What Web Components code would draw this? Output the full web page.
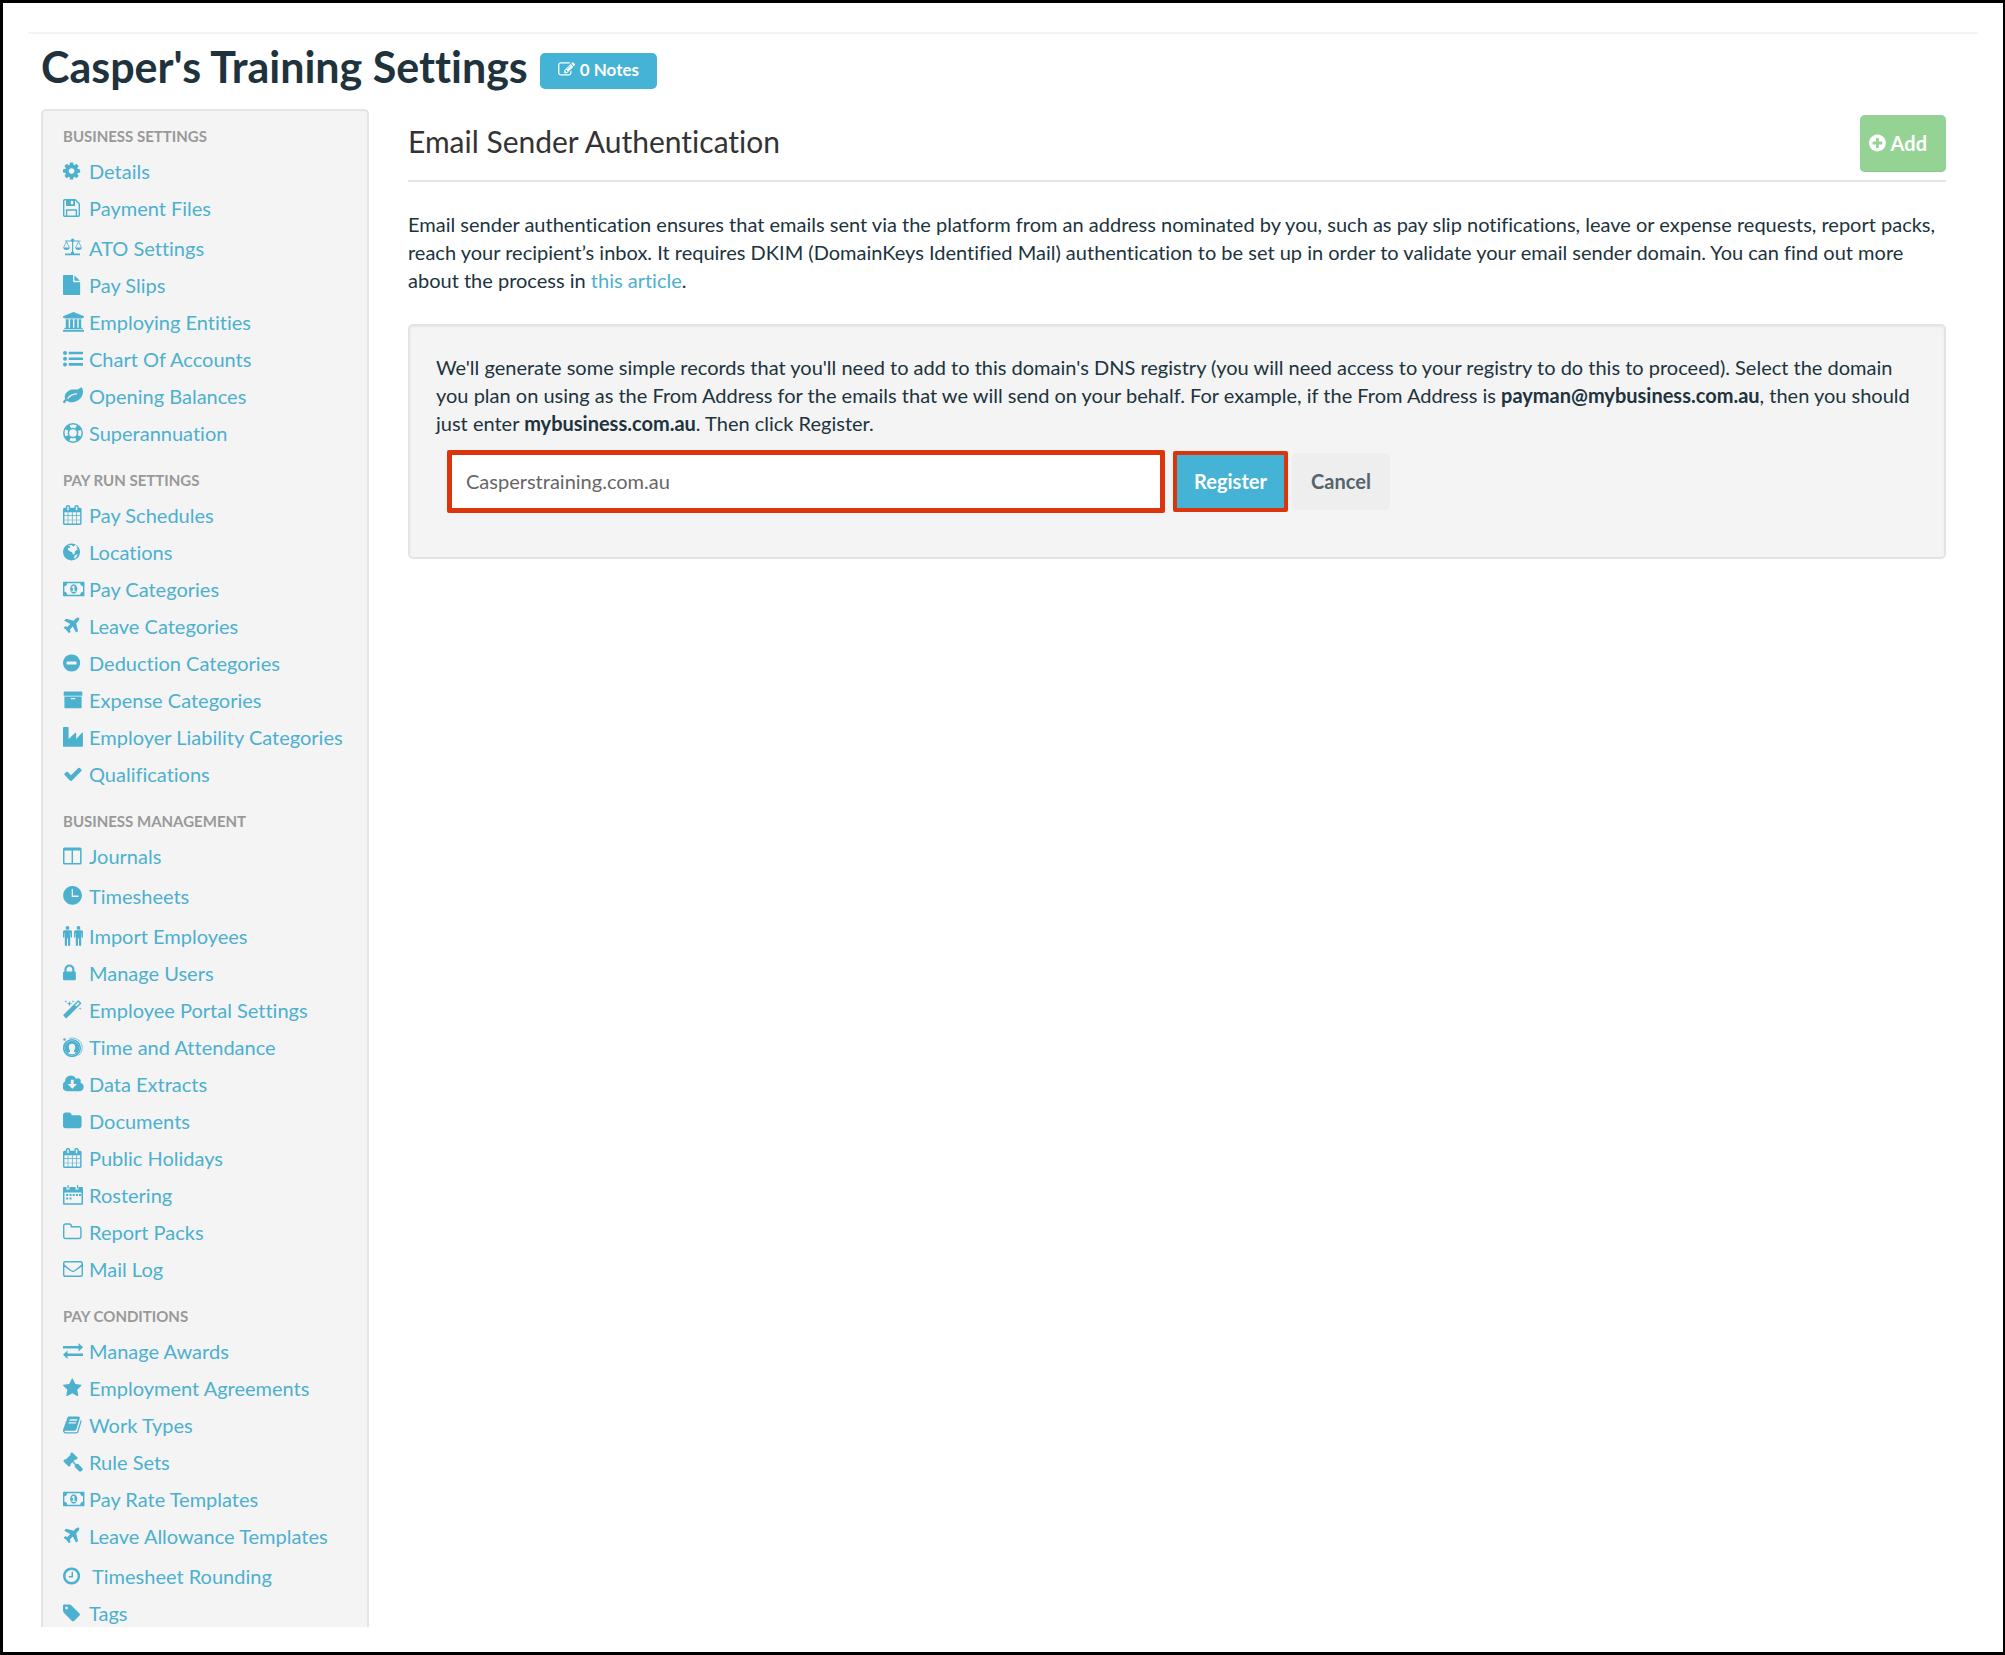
<!DOCTYPE html>
<html lang="en">
<head>
<meta charset="utf-8">
<title>Casper's Training Settings</title>
<style>
    :root {
        --blue: #45b3d6;
        --link: #4cb0cf;
        --ink: #20333d;
        --panel: #f4f4f4;
        --line: #e4e4e4;
        --red: #dd350b;
    }

    body {
        margin: 0;
        background: #fff;
        color: var(--ink);
        font-family: Lato, "Open Sans", sans-serif;
        font-size: 20px;
        line-height: 28px;
        font-variant-ligatures: none;
    }
</style>
</head>
<body>

<settings-page>
    <page-header slot="header" notes="0">Casper's Training Settings</page-header>

    <settings-nav slot="nav">
        <nav-group label="Business Settings">
            <nav-item icon="cog">Details</nav-item>
            <nav-item icon="floppy">Payment Files</nav-item>
            <nav-item icon="scales" size="tall">ATO Settings</nav-item>
            <nav-item icon="file">Pay Slips</nav-item>
            <nav-item icon="university">Employing Entities</nav-item>
            <nav-item icon="list">Chart Of Accounts</nav-item>
            <nav-item icon="leaf">Opening Balances</nav-item>
            <nav-item icon="ring">Superannuation</nav-item>
        </nav-group>
        <nav-group label="Pay Run Settings">
            <nav-item icon="calendar">Pay Schedules</nav-item>
            <nav-item icon="globe">Locations</nav-item>
            <nav-item icon="money">Pay Categories</nav-item>
            <nav-item icon="plane">Leave Categories</nav-item>
            <nav-item icon="minus">Deduction Categories</nav-item>
            <nav-item icon="archive">Expense Categories</nav-item>
            <nav-item icon="industry">Employer Liability Categories</nav-item>
            <nav-item icon="check">Qualifications</nav-item>
        </nav-group>
        <nav-group label="Business Management">
            <nav-item icon="columns">Journals</nav-item>
            <nav-item icon="clock" size="taller">Timesheets</nav-item>
            <nav-item icon="people">Import Employees</nav-item>
            <nav-item icon="lock">Manage Users</nav-item>
            <nav-item icon="magic">Employee Portal Settings</nav-item>
            <nav-item icon="attendance">Time and Attendance</nav-item>
            <nav-item icon="cloud">Data Extracts</nav-item>
            <nav-item icon="folder">Documents</nav-item>
            <nav-item icon="calendar">Public Holidays</nav-item>
            <nav-item icon="roster">Rostering</nav-item>
            <nav-item icon="folder-o">Report Packs</nav-item>
            <nav-item icon="envelope">Mail Log</nav-item>
        </nav-group>
        <nav-group label="Pay Conditions">
            <nav-item icon="exchange">Manage Awards</nav-item>
            <nav-item icon="star">Employment Agreements</nav-item>
            <nav-item icon="book">Work Types</nav-item>
            <nav-item icon="gavel">Rule Sets</nav-item>
            <nav-item icon="money">Pay Rate Templates</nav-item>
            <nav-item icon="plane">Leave Allowance Templates</nav-item>
            <nav-item icon="clock-o" size="tall" wide>Timesheet Rounding</nav-item>
            <nav-item icon="tag">Tags</nav-item>
        </nav-group>
    </settings-nav>

    <content-section heading="Email Sender Authentication">
        <action-button slot="action" kind="add" icon="plus">Add</action-button>
        <text-block>Email sender authentication ensures that emails sent via the platform from an address nominated by you, such as pay slip notifications, leave or expense requests, report packs, reach your recipient’s inbox. It requires DKIM (DomainKeys Identified Mail) authentication to be set up in order to validate your email sender domain. You can find out more about the process in <text-link>this article</text-link>.</text-block>
        <domain-form value="Casperstraining.com.au">We'll generate some simple records that you'll need to add to this domain's DNS registry (you will need access to your registry to do this to proceed). Select the domain you plan on using as the From Address for the emails that we will send on your behalf. For example, if the From Address is <b>payman@mybusiness.com.au</b>, then you should just enter <b>mybusiness.com.au</b>. Then click Register.</domain-form>
    </content-section>
</settings-page>

<script>
const DISC = 'm320-64q0 209-103 385.5t-279.5 279.5-385.5 103-385.5-103-279.5-279.5-103-385.5 103-385.5 279.5-279.5 385.5-103 385.5 103 279.5 279.5 103 385.5z';

// [viewBox, markup]; glyphs on the 1792 grid are 20px high, the rest are drawn on a 22x20 grid
const ICONS = {
    cog: ['128 0 1971 1792', '<path d="M1152 896q0-106-75-181t-181-75-181 75-75 181 75 181 181 75 181-75 75-181zm512-109v222q0 12-8 23t-20 13l-185 28q-19 54-39 91 35 50 107 138 10 12 10 25t-9 23q-27 37-99 108t-94 71q-12 0-26-9l-138-108q-44 23-91 38-16 136-29 186-7 28-36 28h-222q-14 0-24.5-8.5t-11.5-21.5l-28-184q-49-16-90-37l-141 107q-10 9-25 9-14 0-25-11-126-114-165-168-7-10-7-23 0-12 8-23 15-21 51-66.5t54-70.5q-27-50-41-99l-183-27q-13-2-21-12.5t-8-23.5v-222q0-12 8-23t19-13l186-28q14-46 39-92-40-57-107-138-10-12-10-24 0-10 9-23 26-36 98.5-107.5t94.5-71.5q13 0 26 10l138 107q44-23 91-38 16-136 29-186 7-28 36-28h222q14 0 24.5 8.5t11.5 21.5l28 184q49 16 90 37l142-107q9-9 24-9 13 0 25 10 129 119 165 170 7 8 7 22 0 12-8 23-15 21-51 66.5t-54 70.5q26 50 41 98l183 28q13 2 21 12.5t8 23.5z"/>'],
    floppy: ['0 0 22 20', '<path fill="none" stroke="currentColor" stroke-width="1.4" d="M1.7 1.7h10.6l4 4v11.6q0 1-1 1H1.7q-1 0-1-1V2.7q0-1 1-1zM3.6 18v-6h9.8v6"/><path fill-rule="evenodd" d="M3 1.5h9V8H3zm4.8 1.2v3.6h2.4V2.7z"/>'],
    scales: ['0 0 22 20', '<path d="M2 15.5h15v1.7H2zM8 14h3v2H8zM9 2h1.2v13H9zM2 2.6h15.5v1H2z"/><circle cx="9.6" cy="2.2" r="1.6"/><path d="M0 9.5h7q-.6 2.5-3.5 2.5T0 9.5zM12 9.5h7q-.6 2.5-3.5 2.5T12 9.5z"/><path fill="none" stroke="currentColor" stroke-width=".8" d="M3.5 3.5L.6 9.6M3.5 3.5l2.9 6.1M15.5 3.5l-2.9 6.1M15.5 3.5l2.9 6.1"/>'],
    file: ['128 0 1971 1792', '<path d="M1152 512v-472q22 14 36 28l408 408q14 14 28 36h-472zm-128 32q0 40 28 68t68 28h544v1056q0 40-28 68t-68 28h-1344q-40 0-68-28t-28-68v-1600q0-40 28-68t68-28h800v544z"/>'],
    university: ['0 0 22 20', '<path d="M10.5 0L21 4.3v1.4h-1.4q0 .8-.8.8H2.2q-.8 0-.8-.8H0V4.3zM2.8 7.2h2.9v8.5h1.4V7.2H10v8.5h1.4V7.2h2.9v8.5h1.4V7.2h2.5v8.5h.7q.8 0 .8.8v.6H1.4v-.6q0-.8.8-.8h.6zM.7 17.7h19.6q.7 0 .7.8v1.2H0v-1.2q0-.8.7-.8z"/>'],
    list: ['0 0 22 20', '<circle cx="2" cy="4" r="2"/><circle cx="2" cy="9.7" r="2"/><circle cx="2" cy="15.4" r="2"/><path d="M5.7 2.7H20v2.6H5.7zM5.7 8.4H20V11H5.7zM5.7 14.1H20v2.6H5.7z"/>'],
    leaf: ['0 0 1971 1792', '<path d="M1280 704q0-26-19-45t-45-19q-172 0-318 49.5t-259.5 134-235.5 219.5q-19 21-19 45 0 26 19 45t45 19q24 0 45-19 27-24 74-71t67-66q137-124 268.5-176t313.5-52q26 0 45-19t19-45zm512-198q0 95-20 193-46 224-184.5 383t-357.5 268q-214 108-438 108-148 0-286-47-15-5-88-42t-96-37q-16 0-39.5 32t-45 70-52.5 70-60 32q-43 0-63.5-17.5t-45.5-59.5q-2-4-6-11t-5.5-10-3-9.5-1.5-13.5q0-35 31-73.5t68-65.5 68-56 31-48q0-4-14-38t-16-44q-9-51-9-104 0-115 43.5-220t119-184.5 170.5-139 204-95.5q55-18 145-25.5t179.5-9 178.5-6 163.5-24 113.5-56.5l29.5-29.5 29.5-28 27-20 36.5-16 43.5-4.5q39 0 70.5 46t47.5 112 24 124 8 96z"/>'],
    ring: ['0 0 22 20', '<g fill="none" stroke="currentColor"><circle cx="10" cy="10" r="9.2" stroke-width="1.5"/><circle cx="10" cy="10" r="4.6" stroke-width="1.5"/><circle cx="10" cy="10" r="7" stroke-width="4.5" stroke-dasharray="5 6" stroke-dashoffset="-3"/></g>'],
    calendar: ['64 0 1971 1792', '<path d="M192 1664h288v-288h-288v288zm352 0h320v-288h-320v288zm-352-352h288v-320h-288v320zm352 0h320v-320h-320v320zm-352-384h288v-288h-288v288zm736 736h320v-288h-320v288zm-384-736h320v-288h-320v288zm768 736h288v-288h-288v288zm-384-352h320v-320h-320v320zm-352-864v-288q0-13-9.5-22.5t-22.5-9.5h-64q-13 0-22.5 9.5t-9.5 22.5v288q0 13 9.5 22.5t22.5 9.5h64q13 0 22.5-9.5t9.5-22.5zm736 864h288v-320h-288v320zm-384-384h320v-288h-320v288zm384 0h288v-288h-288v288zm32-480v-288q0-13-9.5-22.5t-22.5-9.5h-64q-13 0-22.5 9.5t-9.5 22.5v288q0 13 9.5 22.5t22.5 9.5h64q13 0 22.5-9.5t9.5-22.5zm384-64v1280q0 52-38 90t-90 38h-1408q-52 0-90-38t-38-90v-1280q0-52 38-90t90-38h128v-96q0-66 47-113t113-47h64q66 0 113 47t47 113v96h384v-96q0-66 47-113t113-47h64q66 0 113 47t47 113v96h128q52 0 90 38t38 90z"/>'],
    globe: ['0 0 22 20', '<path fill-rule="evenodd" d="M8.5 1.5a8.5 8.5 0 1 0 .01 0zM4.6 3.6l2.2.6.6 1.9-2.1-.4-.6 1.6 1.8 2 2.7 1 .8 2.4 1.6-.9.4-2.5 3-2-1.5-1 1-1.6-2.2-1.6-2 1.3-1.7-1.5zM11.5 13.5l3.3-1.4-1.8 3.6-2 1z"/>'],
    money: ['0 0 1971 1792', '<path d="M768 1152h384v-96h-128v-448h-114l-148 137 77 80q42-37 55-57h2v288h-128v96zm512-256q0 70-21 142t-59.5 134-101.5 101-138 39-138-39-101.5-101-59.5-134-21-142 21-142 59.5-134 101.5-101 138-39 138 39 101.5 101 59.5 134 21 142zm512 256v-512q-106 0-181-75t-75-181h-1152q0 106-75 181t-181 75v512q106 0 181 75t75 181h1152q0-106 75-181t181-75zm128-832v1152q0 26-19 45t-45 19h-1792q-26 0-45-19t-19-45v-1152q0-26 19-45t45-19h1792q26 0 45 19t19 45z"/>'],
    plane: ['128 0 1971 1792', '<path d="M1568 160q44 52 12 148t-108 172l-161 161 160 696q5 19-12 33l-128 96q-7 6-19 6-4 0-7-1-15-3-21-16l-279-508-259 259 53 194q5 17-8 31l-96 96q-9 9-23 9h-2q-15-2-24-13l-189-252-252-189q-11-7-13-23-1-13 9-25l96-97q9-9 23-9 6 0 8 1l194 53 259-259-508-279q-14-8-17-24-2-16 9-27l128-128q14-13 30-8l665 159 160-160q76-76 172-108t148 12z"/>'],
    minus: ['128 0 1971 1792', '<path d="M1344 960v-128q0-26-19-45t-45-19h-768q-26 0-45 19t-19 45v128q0 26 19 45t45 19h768q26 0 45-19t19-45z' + DISC + '"/>'],
    plus: ['128 0 1971 1792', '<path d="M1344 960v-128q0-26-19-45t-45-19h-256v-256q0-26-19-45t-45-19h-128q-26 0-45 19t-19 45v256h-256q-26 0-45 19t-19 45v128q0 26 19 45t45 19h256v256q0 26 19 45t45 19h128q26 0 45-19t19-45v-256h256q26 0 45-19t19-45z' + DISC + '"/>'],
    archive: ['0 0 22 20', '<path fill-rule="evenodd" d="M1.4 1.5h17.2q.7 0 .7.7v3.5H.7V2.2q0-.7.7-.7zM1.4 6.5h17.2v11q0 .8-.7.8H2.1q-.7 0-.7-.8zm6.8 1.6q-.6 0-.6.6t.6.6h3.6q.6 0 .6-.6t-.6-.6z"/>'],
    industry: ['0 0 22 20', '<path d="M.7 0h4.2q.7 0 .7.7V12l6.7-6.3q.9-.6.9.6V12l5.7-6.3q1-.6 1 .6V19q0 .7-.7.7H.7q-.7 0-.7-.7V.7Q0 0 .7 0z"/>'],
    check: ['0 0 1971 1792', '<path d="M1671 566q0 40-28 68l-724 724-136 136q-28 28-68 28t-68-28l-136-136-362-362q-28-28-28-68t28-68l136-136q28-28 68-28t68 28l294 295 656-657q28-28 68-28t68 28l136 136q28 28 28 68z"/>'],
    columns: ['0 0 22 20', '<path fill-rule="evenodd" d="M1.5 1.5h15.6q1.5 0 1.5 1.5v14q0 1.5-1.5 1.5H1.5Q0 18.5 0 17V3q0-1.5 1.5-1.5zm0 2.9v12.7h7.1V4.4zm8.5 0v12.7h7.1V4.4z"/>'],
    clock: ['0 0 22 20', '<path fill-rule="evenodd" d="M9.5 0a9.4 9.4 0 1 0 .01 0zM8.7 3h1.3v6.5h5.5V11H8.7z"/>'],
    people: ['0 0 22 20', '<circle cx="4.5" cy="1.9" r="1.9"/><circle cx="15.5" cy="1.9" r="1.9"/><path d="M1.5 4.3h6q1.5 0 1.5 1.5V11q0 .8-.7.8T7.6 11V7h-.4v12q0 1-1.1 1T5 19v-6.5H4V19q0 1-1.1 1t-1.1-1V7h-.4v4q0 .8-.7.8T0 11V5.8q0-1.5 1.5-1.5z"/><path d="M12.5 4.3h6q1.5 0 1.5 1.5V11q0 .8-.7.8t-.7-.8V7h-.4v12q0 1-1.1 1T16 19v-6.5h-1V19q0 1-1.1 1t-1.1-1V7h-.4v4q0 .8-.7.8T11 11V5.8q0-1.5 1.5-1.5z"/>'],
    lock: ['320 0 1971 1792', '<path d="M640 768h512v-192q0-106-75-181t-181-75-181 75-75 181v192zm832 96v576q0 40-28 68t-68 28h-960q-40 0-68-28t-28-68v-576q0-40 28-68t68-28h32v-192q0-184 132-316t316-132 316 132 132 316v192h32q40 0 68 28t28 68z"/>'],
    magic: ['64 0 1971 1792', '<path d="M1254 581l293-293-107-107-293 293zm447-293q0 27-18 45l-1286 1286q-18 18-45 18t-45-18l-198-198q-18-18-18-45t18-45l1286-1286q18-18 45-18t45 18l198 198q18 18 18 45zm-1351-190l98 30-98 30-30 98-30-98-98-30 98-30 30-98zm350 162l196 60-196 60-60 196-60-196-196-60 196-60 60-196zm930 478l98 30-98 30-30 98-30-98-98-30 98-30 30-98zm-640-640l98 30-98 30-30 98-30-98-98-30 98-30 30-98z"/>'],
    attendance: ['0 0 22 20', '<g fill="none" stroke="currentColor"><circle cx="9" cy="11" r="8.3" stroke-width="1.6"/><path stroke-width=".7" d="M6 1.2Q15 0 18.5 6.5q2.5 7-3 12"/></g><circle cx="1.5" cy="2.5" r="1.3"/><path fill-rule="evenodd" d="M9 3.7a7.3 7.3 0 1 0 .01 0zm0 3q3.2 0 3.2 3.4 0 2.1-1.2 3.4v1.2l2 1q-1.7 1.6-4 1.6t-4-1.6l2-1v-1.2q-1.2-1.3-1.2-3.4Q5.8 6.7 9 6.7z"/>'],
    cloud: ['0 0 1971 1792', '<path d="M1216 928q0-14-9-23t-23-9h-224v-352q0-13-9.5-22.5t-22.5-9.5h-192q-13 0-22.5 9.5t-9.5 22.5v352h-224q-13 0-22.5 9.5t-9.5 22.5q0 14 9 23l352 352q9 9 23 9t23-9l351-351q10-12 10-24zm640 224q0 159-112.5 271.5t-271.5 112.5h-1088q-185 0-316.5-131.5t-131.5-316.5q0-130 70-240t188-165q-2-30-2-43 0-212 150-362t362-150q156 0 285.5 87t188.5 231q71-62 166-62 106 0 181 75t75 181q0 76-41 138 130 31 213.5 135.5t83.5 238.5z"/>'],
    folder: ['64 0 1971 1792', '<path d="M1728 608v704q0 92-66 158t-158 66h-1216q-92 0-158-66t-66-158v-960q0-92 66-158t158-66h320q92 0 158 66t66 158v32h672q92 0 158 66t66 158z"/>'],
    'folder-o': ['0 0 22 20', '<path fill="none" stroke="currentColor" stroke-width="1.4" d="M2.7 2h3.6q2 0 2 2v.7h7.6q2 0 2 2V14.5q0 2-2 2H2.7q-2 0-2-2V4q0-2 2-2z"/>'],
    roster: ['0 0 22 20', '<path fill-rule="evenodd" d="M1 2h2.5v2.5h3V2h6v2.5h3V2H19q1 0 1 1v15.7q0 1-1 1H1q-1 0-1-1V3q0-1 1-1zm.5 5.5v10.7h17V7.5z"/><path d="M4.5 0h1.2v3.5H4.5zM14 0h1.2v3.5H14zM6.5 9h2v2h-2zM9.7 9h2v2h-2zM13 9h2v2h-2zM16 9h2v2h-2zM3.2 9h2v2h-2zM3.2 12.5h2v2h-2zM6.5 12.5h2v2h-2z"/>'],
    envelope: ['0 0 22 20', '<path fill="none" stroke="currentColor" stroke-width="1.4" d="M2.2 2.7h15.6q1.5 0 1.5 1.5v11.6q0 1.5-1.5 1.5H2.2q-1.5 0-1.5-1.5V4.2q0-1.5 1.5-1.5zM.7 5.5q1 1.5 5.8 5 2.5 2 3.5 2t3.5-2q4.8-3.5 5.8-5"/>'],
    exchange: ['0 0 22 20', '<path d="M0 5h15.5V2l4.5 4.2-4.5 4.2V7.5H0zM20 12.5H4.5V9.6L0 13.8 4.5 18v-3H20z"/>'],
    star: ['64 0 1971 1792', '<path d="M1728 647q0 22-26 48l-363 354 86 500q1 7 1 20 0 21-10.5 35.5t-30.5 14.5q-19 0-40-12l-449-236-449 236q-22 12-40 12-21 0-31.5-14.5t-10.5-35.5q0-6 2-20l86-500-364-354q-25-27-25-48 0-37 56-46l502-73 225-455q19-41 49-41t49 41l225 455 502 73q56 9 56 46z"/>'],
    book: ['64 0 1971 1792', '<path d="M1703 478q40 57 18 129l-275 906q-19 64-76.5 107.5t-122.5 43.5h-923q-77 0-148.5-53.5t-99.5-131.5q-24-67-2-127 0-4 3-27t4-37q1-8-3-21.5t-3-19.5q2-11 8-21t16.5-23.5 16.5-23.5q23-38 45-91.5t30-91.5q3-10 .5-30t-.5-28q3-11 17-28t17-23q21-36 42-92t25-90q1-9-2.5-32t.5-28q4-13 22-30.5t22-22.5q19-26 42.5-84.5t27.5-96.5q1-8-3-25.5t-2-26.5q2-8 9-18t18-23 17-21q8-12 16.5-30.5t15-35 16-36 19.5-32 26.5-23.5 36-11.5 47.5 5.5l-1 3q38-9 51-9h761q74 0 114 56t18 130l-274 906q-36 119-71.5 153.5t-128.5 34.5h-869q-27 0-38 15-11 16-1 43 24 70 144 70h923q29 0 56-15.5t35-41.5l300-987q7-22 5-57 38 15 59 43zm-1064 2q-4 13 2 22.5t20 9.5h608q13 0 25.5-9.5t16.5-22.5l21-64q4-13-2-22.5t-20-9.5h-608q-13 0-25.5 9.5t-16.5 22.5zm-83 256q-4 13 2 22.5t20 9.5h608q13 0 25.5-9.5t16.5-22.5l21-64q4-13-2-22.5t-20-9.5h-608q-13 0-25.5 9.5t-16.5 22.5z"/>'],
    gavel: ['0 0 1971 1792', '<path d="M1771 1536q0 53-37 90l-107 108q-39 37-91 37-53 0-90-37l-363-364q-38-36-38-90 0-53 43-96l-256-256-126 126q-14 14-34 14t-34-14q2 2 12.5 12t12.5 13 10 11.5 10 13.5 6 13.5 5.5 16.5 1.5 18q0 38-28 68-3 3-16.5 18t-19 20.5-18.5 16.5-22 15.5-22 9-26 4.5q-40 0-68-28l-408-408q-28-28-28-68 0-13 4.5-26t9-22 15.5-22 16.5-18.5 20.5-19 18-16.5q30-28 68-28 10 0 18 1.5t16.5 5.5 13.5 6 13.5 10 11.5 10 13 12.5 12 12.5q-14-14-14-34t14-34l348-348q14-14 34-14t34 14q-2-2-12.5-12t-12.5-13-10-11.5-10-13.5-6-13.5-5.5-16.5-1.5-18q0-38 28-68 3-3 16.5-18t19-20.5 18.5-16.5 22-15.5 22-9 26-4.5q40 0 68 28l408 408q28 28 28 68 0 13-4.5 26t-9 22-15.5 22-16.5 18.5-20.5 19-18 16.5q-30 28-68 28-10 0-18-1.5t-16.5-5.5-13.5-6-13.5-10-11.5-10-13-12.5-12-12.5q14 14 14 34t-14 34l-126 126 256 256q43-43 96-43 52 0 91 37l363 363q37 39 37 91z"/>'],
    'clock-o': ['128 0 1971 1792', '<path d="M1024 544v448q0 14-9 23t-23 9h-320q-14 0-23-9t-9-23v-64q0-14 9-23t23-9h224v-352q0-14 9-23t23-9h64q14 0 23 9t9 23zm416 352q0-148-73-273t-198-198-273-73-273 73-198 198-73 273 73 273 198 198 273 73 273-73 198-198 73-273zm224 0q0 209-103 385.5t-279.5 279.5-385.5 103-385.5-103-279.5-279.5-103-385.5 103-385.5 279.5-279.5 385.5-103 385.5 103 279.5 279.5 103 385.5z"/>'],
    tag: ['128 0 1971 1792', '<path d="M576 448q0-53-37.5-90.5t-90.5-37.5-90.5 37.5-37.5 90.5 37.5 90.5 90.5 37.5 90.5-37.5 37.5-90.5zm1067 576q0 53-37 90l-491 492q-39 37-91 37-53 0-90-37l-715-716q-38-37-64.5-101t-26.5-117v-416q0-52 38-90t90-38h416q53 0 117 26.5t102 64.5l715 714q37 39 37 91z"/>'],
    pencil: ['0 0 1971 1792', '<path d="M888 1184l116-116-152-152-116 116v56h96v96h56zm440-720q-16-16-33 1l-350 350q-17 17-1 33t33-1l350-350q17-17 1-33zm80 594v190q0 119-84.5 203.5t-203.5 84.5h-832q-119 0-203.5-84.5t-84.5-203.5v-832q0-119 84.5-203.5t203.5-84.5h832q63 0 117 25 15 7 18 23 3 17-9 29l-49 49q-14 14-32 8-23-6-45-6h-832q-66 0-113 47t-47 113v832q0 66 47 113t113 47h832q66 0 113-47t47-113v-126q0-13 9-22l64-64q15-15 35-7t20 29zm-96-738l288 288-672 672h-288v-288zm444 132l-92 92-288-288 92-92q28-28 68-28t68 28l152 152q28 28 28 68t-28 68z"/>']
};

function icon(name) {
    const [box, body] = ICONS[name];
    return `<svg viewBox="${box}" fill="currentColor" aria-hidden="true">${body}</svg>`;
}

function define(name, render) {
    customElements.define(name, class extends HTMLElement {
        constructor() {
            super();
            this.attachShadow({mode: 'open'});
        }

        connectedCallback() {
            this.shadowRoot.innerHTML = render(this);
        }
    });
}

define('settings-page', () => `
<style>
    :host {
        display: flex;
        flex-direction: column;
        box-sizing: border-box;
        height: 100vh;
        padding: 29px 25px 25px;
        border: 3px solid #000;
        border-right-width: 2px;
    }

    .top {
        border-top: 2px solid #f4f4f4;
        padding: 6px 32px 8px 13px;
    }

    .columns {
        display: grid;
        grid-template-columns: 328px minmax(0, 1fr);
        gap: 39px;
        flex: 1;
        min-height: 0;
        padding: 0 32px 0 13px;
    }
</style>
<div class="top"><slot name="header"></slot></div>
<div class="columns">
    <slot name="nav"></slot>
    <main><slot></slot></main>
</div>`);

define('page-header', el => `
<style>
    :host {
        display: flex;
        align-items: center;
        gap: 12px;
        height: 61px;
    }

    h1 {
        margin: 0 0 8px;
        font-size: 43px;
        line-height: 48px;
        font-weight: 700;
    }
</style>
<h1><slot></slot></h1>
<action-button kind="notes" icon="pencil">${el.getAttribute('notes')} Notes</action-button>`);

define('action-button', el => `
<style>
    :host {
        display: block;
        flex: none;
    }

    button {
        display: flex;
        align-items: center;
        justify-content: center;
        gap: 3px;
        box-sizing: border-box;
        height: 57px;
        padding: 0 20px;
        border: 0;
        border-radius: 5px;
        font: inherit;
        font-weight: 700;
        color: #fff;
        background: var(--blue);
        cursor: pointer;
    }

    svg {
        width: 22px;
        height: 20px;
    }

    .notes {
        height: 36px;
        padding: 0 18px 2px;
        font-size: 17px;
    }

    .notes svg {
        width: 19px;
        height: 17px;
    }

    .add {
        width: 86px;
        padding: 0 19px 2px 9px;
        gap: 0;
        background: #95d395;
        box-shadow: inset 0 -1px 1px #8acb8a;
    }

    .register {
        width: 115px;
        height: 61px;
        padding: 0 0 2px;
        border: 4px solid var(--red);
        border-radius: 2px;
    }

    .cancel {
        width: 98px;
        padding: 0 0 2px;
        background: #eee;
        color: #56646b;
    }
</style>
<button type="button" class="${el.getAttribute('kind')}">${el.hasAttribute('icon') ? icon(el.getAttribute('icon')) : ''}<slot></slot></button>`);

define('settings-nav', () => `
<style>
    :host {
        display: block;
        overflow: hidden;
        box-sizing: border-box;
        padding: 9px 0 0 20px;
        background: var(--panel);
        border: 2px solid var(--line);
        border-bottom: 0;
        border-radius: 5px 5px 0 0;
    }
</style>
<nav aria-label="Settings"><slot></slot></nav>`);

define('nav-group', el => `
<style>
    :host {
        display: block;
        margin-bottom: 13px;
    }

    h2 {
        margin: 0;
        font-size: 15px;
        line-height: 32px;
        font-weight: 700;
        text-transform: uppercase;
        color: #999;
    }
</style>
<h2>${el.getAttribute('label')}</h2>
<slot></slot>`);

define('nav-item', el => `
<style>
    :host {
        display: block;
    }

    :host([size="tall"]) {
        padding-top: 3px;
    }

    a {
        display: flex;
        align-items: center;
        gap: 4px;
        height: 37px;
        color: var(--link);
        text-decoration: none;
        white-space: nowrap;
    }

    :host([size="taller"]) a {
        height: 43px;
    }

    :host([wide]) a {
        gap: 7px;
    }

    svg {
        width: 22px;
        height: 20px;
        flex: none;
    }
</style>
<a href="#">${icon(el.getAttribute('icon'))}<span><slot></slot></span></a>`);

define('content-section', el => `
<style>
    :host {
        display: block;
    }

    header {
        display: flex;
        align-items: flex-start;
        justify-content: space-between;
        padding: 6px 0 8px;
        border-bottom: 2px solid var(--line);
        margin-bottom: 28px;
    }

    h2 {
        margin: 8px 0 0;
        font-size: 30px;
        line-height: 36px;
        font-weight: 400;
        color: #333;
    }
</style>
<header><h2>${el.getAttribute('heading')}</h2><slot name="action"></slot></header>
<slot></slot>`);

define('text-block', () => `
<style>
    :host {
        display: block;
        margin-bottom: 30px;
    }
</style>
<slot></slot>`);

define('text-link', () => `
<style>
    a {
        color: var(--link);
        text-decoration: none;
    }
</style>
<a href="#"><slot></slot></a>`);

define('domain-form', el => `
<style>
    :host {
        display: block;
        padding: 27px 20px 44px 26px;
        background: var(--panel);
        border: 2px solid var(--line);
        border-radius: 5px;
        box-shadow: inset 0 1px 2px #e8e8e8;
    }

    .row {
        display: flex;
        align-items: center;
        padding: 13px 11px 0;
    }

    input {
        box-sizing: border-box;
        width: 718px;
        height: 63px;
        margin-right: 8px;
        padding: 0 14px 2px;
        border: 5px solid var(--red);
        border-radius: 2px;
        background: #fff;
        color: #666;
        font: inherit;
    }

    [kind="register"] {
        margin-right: 4px;
    }
</style>
<slot></slot>
<form class="row">
    <input type="text" aria-label="Domain" value="${el.getAttribute('value')}">
    <action-button kind="register">Register</action-button>
    <action-button kind="cancel">Cancel</action-button>
</form>`);
</script>
</body>
</html>
